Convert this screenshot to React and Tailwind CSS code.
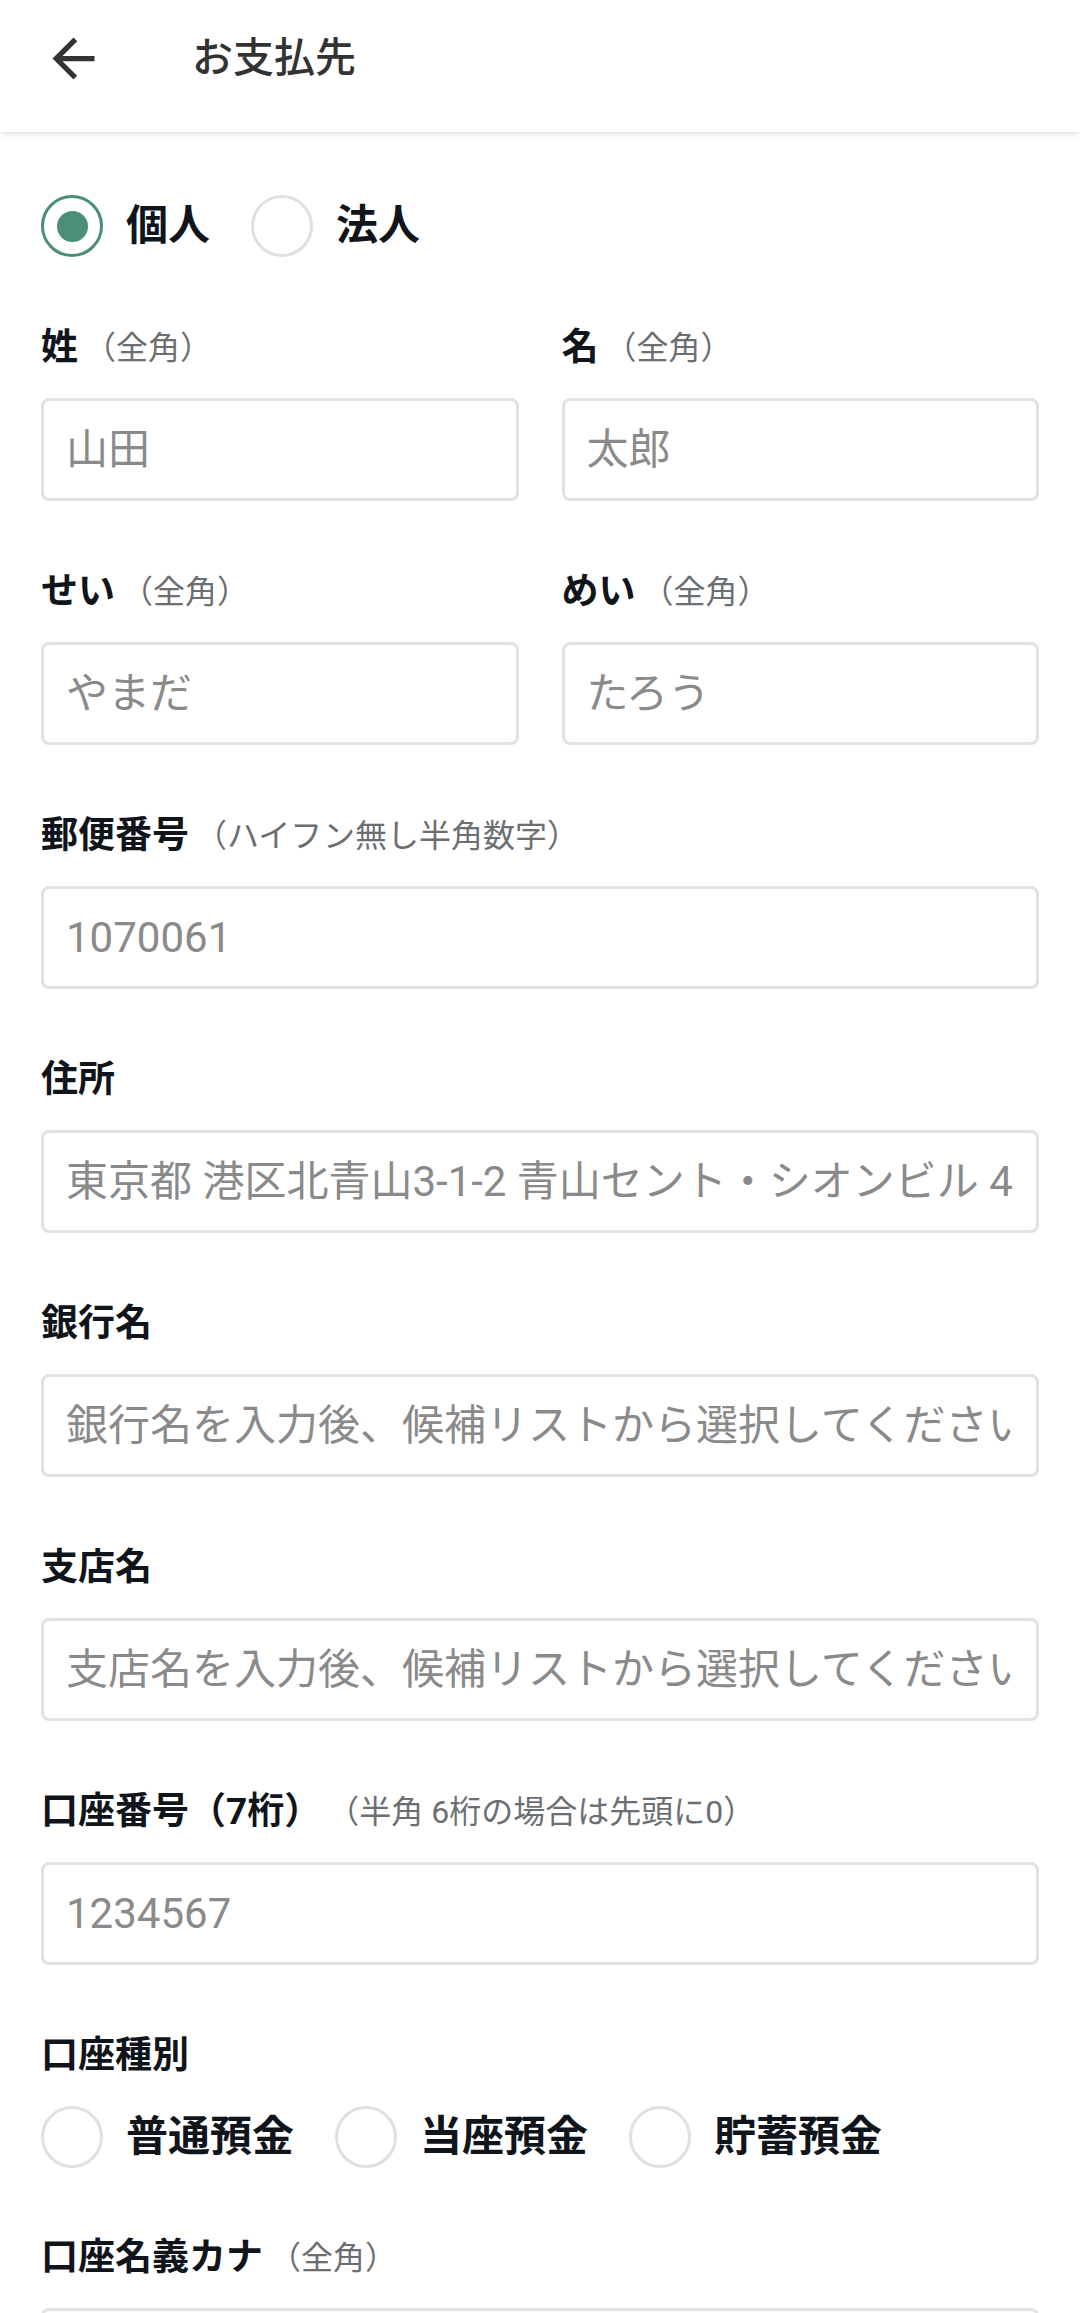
import { useState } from 'react';

const font = { fontFamily: 'Roboto, "Noto Sans CJK JP", sans-serif' };

function Radio({ label, checked, onClick }) {
  return (
    <button type="button" onClick={onClick} className="flex items-center mr-[41px]">
      <span
        className={
          checked
            ? 'w-[62px] h-[62px] rounded-full border-[3px] border-[#4a8f76] flex items-center justify-center'
            : 'w-[62px] h-[62px] rounded-full border-[3px] border-[#e0e0e0] flex items-center justify-center'
        }
      >
        {checked && <span className="w-[31px] h-[31px] rounded-full bg-[#4a8f76]" />}
      </span>
      <span className="ml-[23px] text-[42px] leading-none font-bold text-[#0f151a]">{label}</span>
    </button>
  );
}

function Label({ text, hint }) {
  return (
    <div className="h-[46px] flex items-center whitespace-nowrap">
      <span className="text-[37px] font-bold text-[#0f151a]">{text}</span>
      {hint && <span className="text-[32px] text-[#6b6f72] ml-[6px]">{hint}</span>}
    </div>
  );
}

function Field({ label, hint, placeholder, half }) {
  return (
    <div className={half ? 'flex-1 min-w-0' : ''}>
      <Label text={label} hint={hint} />
      <input
        type="text"
        placeholder={placeholder}
        className="mt-[27px] w-full h-[103px] px-[22px] rounded-[8px] border-[3px] border-[#e2e2e2] text-[42px] text-[#222] placeholder:text-[#8a8a8a] outline-none bg-white"
      />
    </div>
  );
}

export default function App() {
  const [kind, setKind] = useState('個人');
  const [account, setAccount] = useState('');

  return (
    <div className="min-h-screen bg-white" style={font}>
      {/* ヘッダー */}
      <header className="h-[132px] flex items-start pt-[27px] bg-white shadow-[0_2px_6px_rgba(0,0,0,0.12)] relative z-10">
        <button type="button" className="ml-[42px] w-[63px] h-[63px] flex items-center justify-center">
          <svg viewBox="0 0 24 24" className="w-[63px] h-[63px]" fill="#333">
            <path d="M20 11H7.83l5.59-5.59L12 4l-8 8 8 8 1.41-1.41L7.83 13H20v-2z" />
          </svg>
        </button>
        <h1 className="ml-[87px] h-[63px] flex items-center text-[41px] font-medium text-[#333]">お支払先</h1>
      </header>

      <main className="px-[41px] pt-[63px]">
        <div className="flex">
          <Radio label="個人" checked={kind === '個人'} onClick={() => setKind('個人')} />
          <Radio label="法人" checked={kind === '法人'} onClick={() => setKind('法人')} />
        </div>

        <div className="mt-[68px] flex gap-[43px]">
          <Field half label="姓" hint="（全角）" placeholder="山田" />
          <Field half label="名" hint="（全角）" placeholder="太郎" />
        </div>

        <div className="mt-[68px] flex gap-[43px]">
          <Field half label="せい" hint="（全角）" placeholder="やまだ" />
          <Field half label="めい" hint="（全角）" placeholder="たろう" />
        </div>

        <div className="mt-[68px]">
          <Field label="郵便番号" hint="（ハイフン無し半角数字）" placeholder="1070061" />
        </div>
        <div className="mt-[68px]">
          <Field label="住所" placeholder="東京都 港区北青山3-1-2 青山セント・シオンビル 4F" />
        </div>
        <div className="mt-[68px]">
          <Field label="銀行名" placeholder="銀行名を入力後、候補リストから選択してください" />
        </div>
        <div className="mt-[68px]">
          <Field label="支店名" placeholder="支店名を入力後、候補リストから選択してください" />
        </div>
        <div className="mt-[68px]">
          <Field label="口座番号（7桁）" hint="（半角 6桁の場合は先頭に0）" placeholder="1234567" />
        </div>

        <div className="mt-[68px]">
          <Label text="口座種別" />
          <div className="mt-[27px] flex">
            {['普通預金', '当座預金', '貯蓄預金'].map((t) => (
              <Radio key={t} label={t} checked={account === t} onClick={() => setAccount(t)} />
            ))}
          </div>
        </div>

        <div className="mt-[67px]">
          <Field label="口座名義カナ" hint="（全角）" placeholder="ヤマダ タロウ" />
        </div>
      </main>
    </div>
  );
}
